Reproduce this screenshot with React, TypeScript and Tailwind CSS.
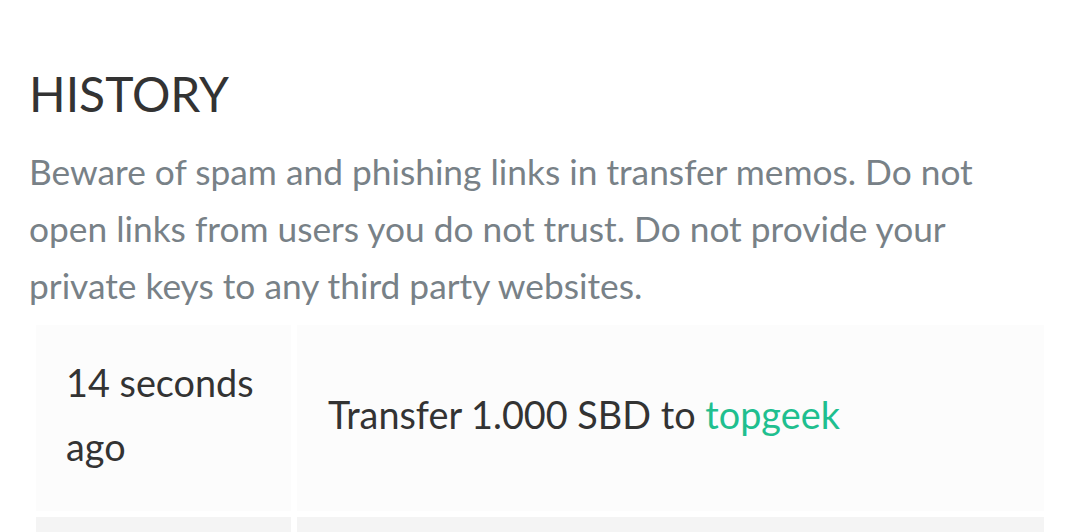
export default function App() {
  return (
    <main className="min-h-screen bg-white" style={{ fontFamily: "Lato, 'Noto Sans', sans-serif" }}>
      <div className="pt-[62px] pl-[29px] pr-[36px]">
        <h1 className="text-[48px] leading-[64px] text-[#333333] font-normal">HISTORY</h1>
        <p className="mt-[17px] text-[35.3px] leading-[57px] text-[#788187] max-w-[990px]">
          Beware of spam and phishing links in transfer memos. Do not open links from users you do not trust. Do not
          provide your private keys to any third party websites.
        </p>
        <table className="mt-[5px] ml-[1px] w-[1020px] border-separate border-spacing-[6px] text-[37.8px] leading-[64px] text-[#333333]">
          <tbody>
            <tr>
              <td className="w-[255px] h-[186px] pl-[30px] pr-[20px] pb-[6px] align-middle bg-[#fcfcfc]">14 seconds ago</td>
              <td className="pl-[31px] pb-[6px] align-middle bg-[#fcfcfc]">
                Transfer 1.000 SBD to <span className="text-[#1fbf8f]">topgeek</span>
              </td>
            </tr>
            <tr>
              <td className="h-[100px] bg-[#f4f4f4]"></td>
              <td className="bg-[#f4f4f4]"></td>
            </tr>
          </tbody>
        </table>
      </div>
    </main>
  )
}
